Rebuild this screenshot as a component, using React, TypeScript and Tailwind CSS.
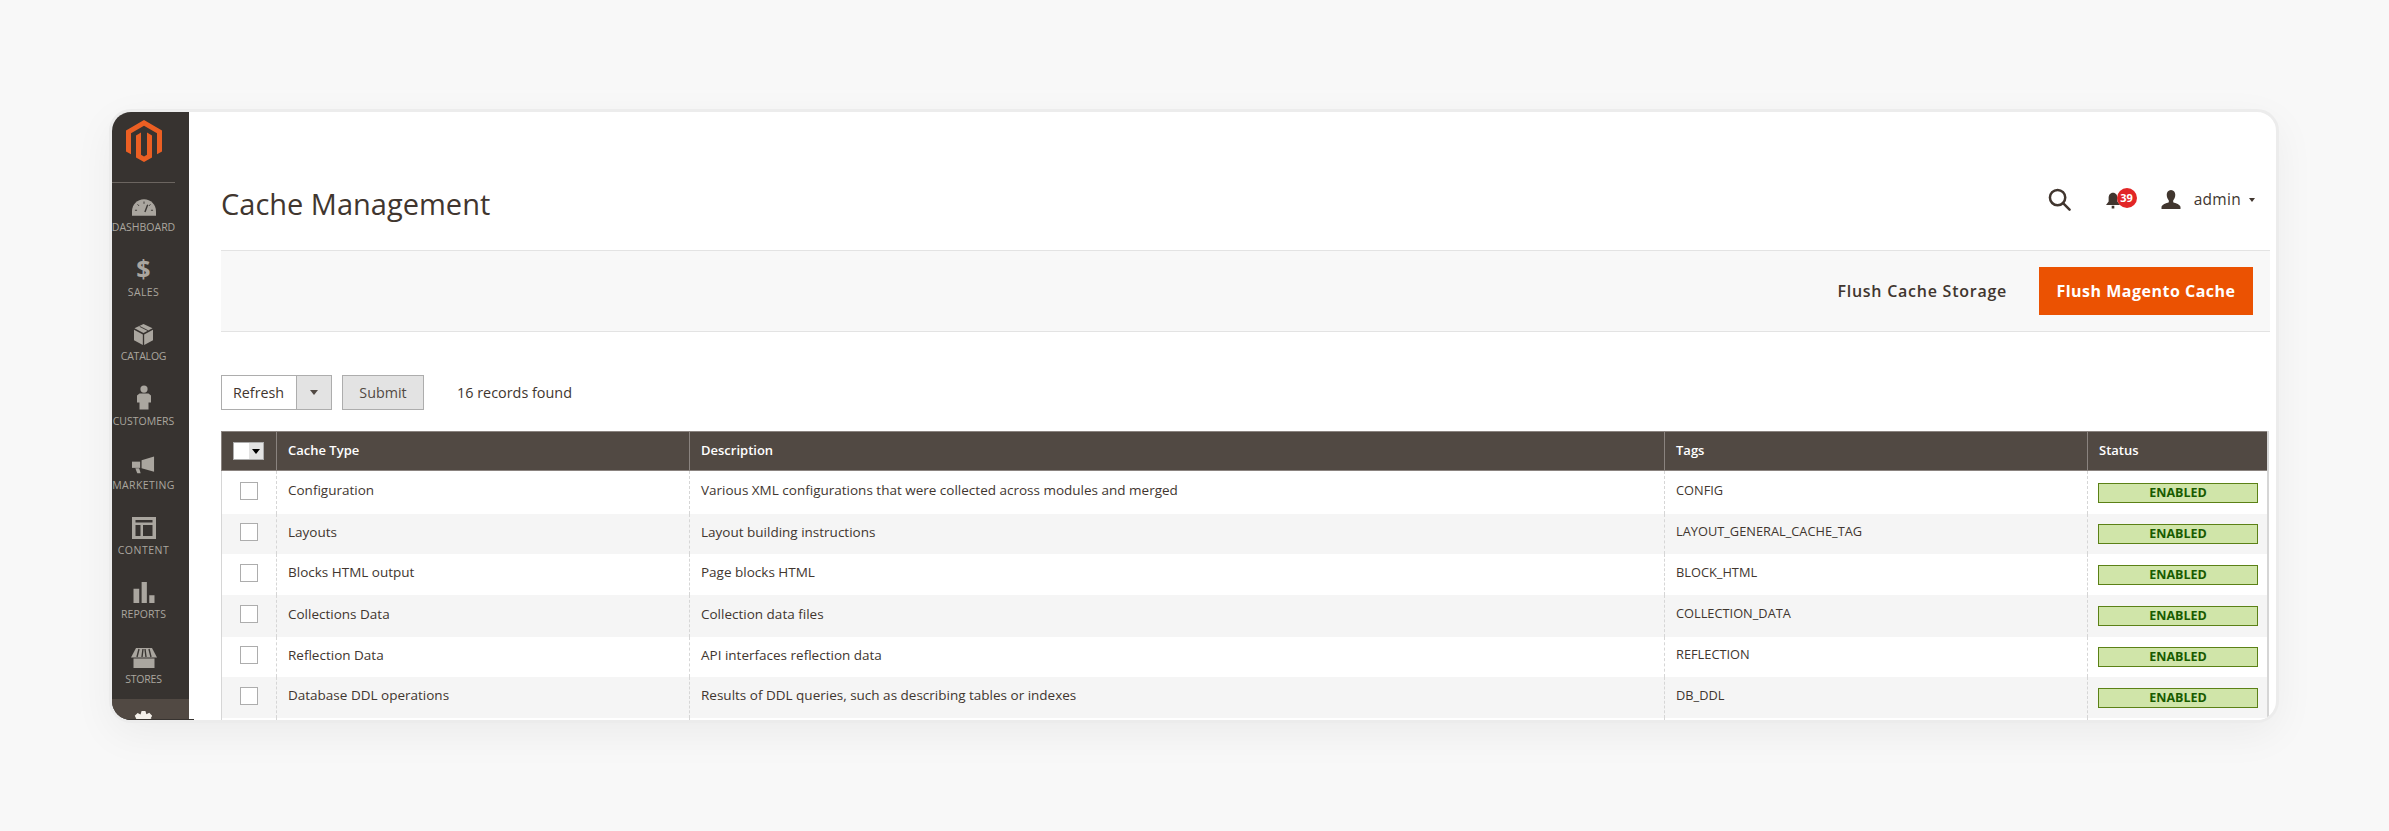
import { ReactNode } from "react";

const font = { fontFamily: '"Open Sans", "Noto Sans", sans-serif' };

const navItems: { label: string; icon: ReactNode; labelClass: string }[] = [
  {
    label: "Dashboard",
    labelClass: "tracking-[0px]",
    icon: (
      <svg viewBox="0 0 26 18" className="w-[24px] h-[17px]" fill="#aaa69f">
        <path d="M13 0C5.8 0 0 5.8 0 13v5h26v-5C26 5.8 20.2 0 13 0z" />
        <path d="M13 2.5v2.5M6 5.5l1.6 1.8M20 5.5l-1.6 1.8M3.2 12h2.3M20.5 12h2.3" stroke="#3b3734" strokeWidth="1" />
        <path d="M17 6l-3 8" stroke="#3b3734" strokeWidth="1.5" />
      </svg>
    ),
  },
  {
    label: "Sales",
    labelClass: "tracking-[0.4px]",
    icon: <span className="text-[25px] leading-[26px] font-bold text-[#aaa69f]">$</span>,
  },
  {
    label: "Catalog",
    labelClass: "tracking-[-0.2px]",
    icon: (
      <svg viewBox="0 0 20 22" className="w-[19px] h-[21px]" fill="#aaa69f">
        <path d="M10 0l9.5 4.5L10 9.500.5 4.500z" />
        <path d="M0 6l9.3 5v11L0 17zM20 6l-9.3 5v11L20 17z" />
        <path d="M6 2.500l9 4.600" stroke="#3b3734" strokeWidth="1" />
      </svg>
    ),
  },
  {
    label: "Customers",
    labelClass: "tracking-[0px]",
    icon: (
      <svg viewBox="0 0 14 24" className="w-[14px] h-[25px]" fill="#aaa69f">
        <circle cx="7" cy="3.6" r="3.6" />
        <path d="M2.5 8h9L14 10v7h-2.5v7h-9v-7H0v-7z" />
      </svg>
    ),
  },
  {
    label: "Marketing",
    labelClass: "tracking-[0.4px]",
    icon: (
      <svg viewBox="0 0 24 18" className="w-[23px] h-[18px]" fill="#aaa69f">
        <path d="M23 0v16L10 12.5V4z" />
        <path d="M0 5.5h8.5v6.5H0z" />
        <path d="M3.5 12.5h4l1.500 5H5.500z" />
      </svg>
    ),
  },
  {
    label: "Content",
    labelClass: "tracking-[0.5px]",
    icon: (
      <svg viewBox="0 0 24 22" className="w-[24px] h-[22px]" fill="#aaa69f">
        <path fillRule="evenodd" d="M0 0h24v22H0zM3.5 3v2.5h17V3zM3.5 8v11h5V8zM11 8v11h9.5V8z" />
      </svg>
    ),
  },
  {
    label: "Reports",
    labelClass: "tracking-[0px]",
    icon: (
      <svg viewBox="0 0 22 22" className="w-[22px] h-[21px]" fill="#aaa69f">
        <path d="M0 7h6v15H0zM8.5 0h5.5v22H8.5zM16.5 14H22v8h-5.5z" />
      </svg>
    ),
  },
  {
    label: "Stores",
    labelClass: "tracking-[-0.2px]",
    icon: (
      <svg viewBox="0 0 26 20" className="w-[26px] h-[20px]" fill="#aaa69f">
        <path d="M5 0h16l5 9.5H0z" />
        <path d="M8 1l-2 8M12 1l-1 8M14 1l1 8M18 1l2 8" stroke="#3b3734" strokeWidth="1.4" />
        <path d="M2.5 10.5h21V20h-21z" />
      </svg>
    ),
  },
];

const rows = [
  { name: "Configuration", desc: "Various XML configurations that were collected across modules and merged", tag: "CONFIG", height: "h-[43px]" },
  { name: "Layouts", desc: "Layout building instructions", tag: "LAYOUT_GENERAL_CACHE_TAG", height: "h-[40px]" },
  { name: "Blocks HTML output", desc: "Page blocks HTML", tag: "BLOCK_HTML", height: "h-[41px]" },
  { name: "Collections Data", desc: "Collection data files", tag: "COLLECTION_DATA", height: "h-[42px]" },
  { name: "Reflection Data", desc: "API interfaces reflection data", tag: "REFLECTION", height: "h-[40px]" },
  { name: "Database DDL operations", desc: "Results of DDL queries, such as describing tables or indexes", tag: "DB_DDL", height: "h-[41px]" },
];

function Caret({ className }: { className: string }) {
  return <span className={`w-0 h-0 border-x-[4px] border-x-transparent border-t-[5px] ${className}`} />;
}

export default function App() {
  return (
    <div className="w-[2389px] h-[831px] bg-[#f8f8f8] pt-[109px] pl-[109px] overflow-hidden" style={font}>
      <div className="relative w-[2170px] h-[614px] bg-white border-[3px] border-[#ececec] rounded-[22px] overflow-hidden flex shadow-[0_12px_40px_rgba(0,0,0,0.05)]">
        <aside className="w-[77px] shrink-0 bg-[#373330] flex flex-col">
          <div className="h-[71px] w-[63px] shrink-0 border-b border-[#6b6560] flex items-start justify-center pt-[8px] pl-[1px]">
            <svg viewBox="0 0 36 42" className="w-[36px] h-[42px]" fill="#eb5f23">
              <path d="M18 0l18 10.4v21l-5 2.9V13.3L18 5.8 5 13.3v21L0 31.4v-21z" />
              <path d="M18 42l-8-4.6V15.5l5-2.9v22.2l3 1.8 3-1.8V12.6l5 2.9v21.9z" />
            </svg>
          </div>
          <nav className="flex flex-col shrink-0">
            {navItems.map((item) => (
              <div key={item.label} className="w-[63px] h-[64.5px] shrink-0 pt-[7px] flex flex-col items-center">
                <div className="h-[26px] flex items-end justify-center">{item.icon}</div>
                <span className={`mt-[4px] text-[10.5px] leading-[14px] uppercase text-[#aaa69f] whitespace-nowrap ${item.labelClass}`}>
                  {item.label}
                </span>
              </div>
            ))}
            <div className="h-[40px] shrink-0 bg-[#514943] flex justify-center pt-[12px] pr-[14px]">
              <svg viewBox="0 0 26 26" className="w-[25px] h-[25px]" fill="#f4f0ea">
                <path d="M11 0h4l1 3.5 3-1.6 3 3-1.6 3L24 9v4l-3.5 1 1.6 3-3 3-3-1.6L15 22h-4l-1-3.5-3 1.6-3-3 1.6-3L2 13V9l3.500-1-1.600-3 3-3 3 1.600z" />
              </svg>
            </div>
          </nav>
        </aside>

        <main className="flex-1 min-w-0 pl-[32px] pr-[7px] flex flex-col">
          <header className="h-[138px] shrink-0 flex items-start justify-between pt-[73px]">
            <h1 className="text-[29px] leading-[38px] text-[#41362f] font-normal">Cache Management</h1>
            <div className="flex items-center pt-[2px] pr-[14px]">
              <svg viewBox="0 0 24 24" className="w-[23px] h-[23px]" fill="none" stroke="#41362f" strokeWidth="2.6">
                <circle cx="10" cy="10" r="8" />
                <path d="M16 16l6.5 6.5" strokeLinecap="round" />
              </svg>
              <div className="relative ml-[35px] w-[32px] h-[24px] flex items-center">
                <svg viewBox="0 0 16 20" className="w-[14px] h-[19px] mt-[2px]" fill="#41362f">
                  <path d="M8 1c3.3 0 5 2.6 5 6v4l3 4H0l3-4V7c0-3.4 1.7-6 5-6z" />
                  <path d="M6.5 16h3v3h-3z" />
                </svg>
                <span className="absolute left-[11px] top-[1px] w-[20px] h-[20px] rounded-full bg-[#e22626] text-white text-[11px] leading-[20px] font-bold text-center">
                  39
                </span>
              </div>
              <svg viewBox="0 0 20 20" className="ml-[23px] w-[20px] h-[19px]" fill="#41362f">
                <path d="M10 0c3 0 4.5 2.3 4.5 5 0 2.5-1 4.5-2.2 6v2c2.5 1 7.7 2.5 7.7 5v2H0v-2c0-2.5 5.2-4 7.7-5v-2C6.5 9.500 5.500 7.500 5.500 5 5.500 2.300 7 0 10 0z" />
              </svg>
              <span className="ml-[13px] text-[15.5px] leading-[20px] text-[#41362f] tracking-[0.3px]">admin</span>
              <Caret className="ml-[8px] mt-[2px] border-t-[#41362f] !border-x-[3.5px] !border-t-[4px]" />
            </div>
          </header>

          <div className="h-[82px] shrink-0 bg-[#f8f8f8] border-y border-[#e3e3e3] flex items-center justify-end pr-[17px] -mr-[1px]">
            <span className="text-[16px] font-semibold text-[#41362f] tracking-[0.75px] mr-[32px]">Flush Cache Storage</span>
            <button className="w-[214px] h-[48px] bg-[#eb5202] text-white text-[16px] font-bold tracking-[0.5px]">
              Flush Magento Cache
            </button>
          </div>

          <div className="mt-[43px] h-[35px] shrink-0 flex items-stretch">
            <div className="w-[111px] flex border border-[#adadad]">
              <span className="flex-1 bg-white pl-[11px] text-[14.3px] leading-[33px] text-[#41362f]">Refresh</span>
              <span className="w-[35px] bg-[#e3e3e3] border-l border-[#adadad] flex items-center justify-center">
                <Caret className="border-t-[#514943]" />
              </span>
            </div>
            <button className="ml-[10px] w-[82px] bg-[#e3e3e3] border border-[#adadad] text-[14.3px] text-[#514943]">Submit</button>
            <span className="ml-[33px] text-[14.4px] leading-[35px] text-[#41362f]">16 records found</span>
          </div>

          <table className="mt-[21px] w-[2048px] table-fixed border-separate border-spacing-0 text-[13.5px] text-[#41362f] border-r-2 border-[#d6d6d6]">
            <thead>
              <tr className="h-[40px] bg-[#514943] text-white text-left text-[13px]">
                <th className="w-[55px] border border-[#8a837f] border-r-0">
                  <div className="flex justify-center pr-[1px]">
                    <div className="w-[31px] h-[18px] flex border border-[#adadad]">
                      <span className="w-[15px] bg-white" />
                      <span className="flex-1 bg-[#e3e3e3] flex items-center justify-center">
                        <Caret className="border-t-black" />
                      </span>
                    </div>
                  </div>
                </th>
                <th className="w-[413px] pl-[11px] font-semibold border-y border-l border-[#8a837f]">Cache Type</th>
                <th className="w-[975px] pl-[11px] font-semibold border-y border-l border-[#8a837f]">Description</th>
                <th className="w-[423px] pl-[11px] font-semibold border-y border-l border-[#8a837f]">Tags</th>
                <th className="pl-[11px] font-semibold border-y border-l border-[#8a837f]">Status</th>
              </tr>
            </thead>
            <tbody>
              {rows.map((row, i) => (
                <tr key={row.name} className={`${row.height} ${i % 2 === 1 ? "bg-[#f5f5f5]" : "bg-white"}`}>
                  <td className="border-l border-[#d6d6d6] pb-[4px]">
                    <div className="w-[18px] h-[18px] mx-auto bg-white border border-[#adadad]" />
                  </td>
                  <td className="pl-[11px] pb-[4px] border-l border-dashed border-[#d6d6d6]">{row.name}</td>
                  <td className="pl-[11px] pb-[4px] border-l border-dashed border-[#d6d6d6]">{row.desc}</td>
                  <td className="pl-[11px] pb-[4px] border-l border-dashed border-[#d6d6d6] text-[12.8px]">{row.tag}</td>
                  <td className="pl-[10px] border-l border-dashed border-[#d6d6d6]">
                    <div className="w-[160px] h-[20px] bg-[#d0e5a9] border border-[#5b8116] text-[#185b00] text-[12.5px] leading-[18px] font-bold text-center">
                      ENABLED
                    </div>
                  </td>
                </tr>
              ))}
              <tr className="h-[20px] bg-white">
                <td className="border-l border-[#d6d6d6]" />
                <td className="border-l border-dashed border-[#d6d6d6]" />
                <td className="border-l border-dashed border-[#d6d6d6]" />
                <td className="border-l border-dashed border-[#d6d6d6]" />
                <td className="border-l border-dashed border-[#d6d6d6]" />
              </tr>
            </tbody>
          </table>
        </main>
        <div className="absolute left-0 bottom-0 w-[82px] h-px bg-[#373330]" />
      </div>
    </div>
  );
}
